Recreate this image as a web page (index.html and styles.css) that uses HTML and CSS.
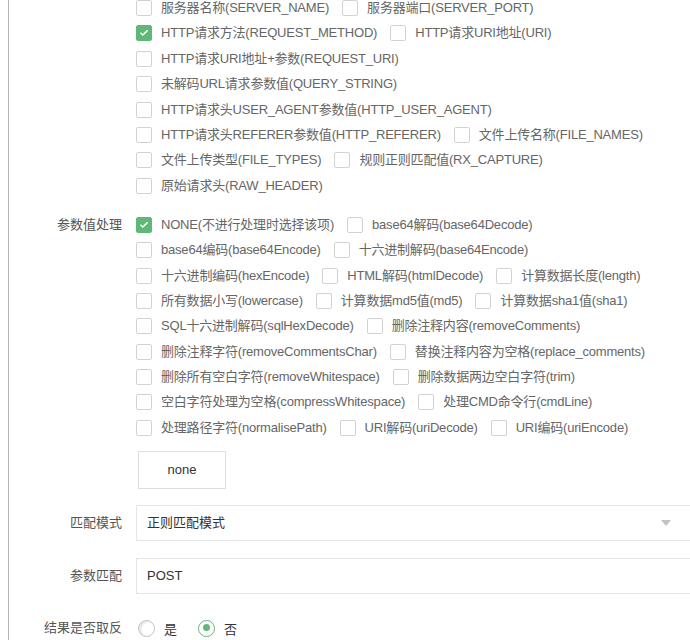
FILE: index.html
```html
<!DOCTYPE html>
<html lang="zh-CN">
<head>
    <meta charset="UTF-8">
    <meta name="viewport" content="width=device-width, initial-scale=1.0">
    <title>规则编辑</title>
    <link rel="stylesheet" href="styles.css">
</head>
<body>
<div class="form">
    <div class="form-item item-vars">
        <label class="form-label"></label>
        <div class="checks">
            <label class="check"><span class="box"></span>服务器名称(SERVER_NAME)</label>
            <label class="check"><span class="box"></span>服务器端口(SERVER_PORT)</label>
            <label class="check checked"><span class="box"><svg viewBox="0 0 16 16"><path d="M4 7.6l2.7 2.6L12.1 5"/></svg></span>HTTP请求方法(REQUEST_METHOD)</label>
            <label class="check"><span class="box"></span>HTTP请求URI地址(URI)</label>
            <label class="check"><span class="box"></span>HTTP请求URI地址+参数(REQUEST_URI)</label>
            <label class="check"><span class="box"></span>未解码URL请求参数值(QUERY_STRING)</label>
            <label class="check"><span class="box"></span>HTTP请求头USER_AGENT参数值(HTTP_USER_AGENT)</label>
            <label class="check"><span class="box"></span>HTTP请求头REFERER参数值(HTTP_REFERER)</label>
            <label class="check"><span class="box"></span>文件上传名称(FILE_NAMES)</label>
            <label class="check"><span class="box"></span>文件上传类型(FILE_TYPES)</label>
            <label class="check"><span class="box"></span>规则正则匹配值(RX_CAPTURE)</label>
            <label class="check"><span class="box"></span>原始请求头(RAW_HEADER)</label>
        </div>
    </div>

    <div class="form-item item-trans">
        <label class="form-label">参数值处理</label>
        <div class="input-block">
            <div class="checks">
                <label class="check checked"><span class="box"><svg viewBox="0 0 16 16"><path d="M4 7.6l2.7 2.6L12.1 5"/></svg></span>NONE(不进行处理时选择该项)</label>
                <label class="check"><span class="box"></span>base64解码(base64Decode)</label>
                <label class="check"><span class="box"></span>base64编码(base64Encode)</label>
                <label class="check"><span class="box"></span>十六进制解码(base64Encode)</label>
                <label class="check"><span class="box"></span>十六进制编码(hexEncode)</label>
                <label class="check"><span class="box"></span>HTML解码(htmlDecode)</label>
                <label class="check"><span class="box"></span>计算数据长度(length)</label>
                <label class="check"><span class="box"></span>所有数据小写(lowercase)</label>
                <label class="check"><span class="box"></span>计算数据md5值(md5)</label>
                <label class="check"><span class="box"></span>计算数据sha1值(sha1)</label>
                <label class="check"><span class="box"></span>SQL十六进制解码(sqlHexDecode)</label>
                <label class="check"><span class="box"></span>删除注释内容(removeComments)</label>
                <label class="check"><span class="box"></span>删除注释字符(removeCommentsChar)</label>
                <label class="check"><span class="box"></span>替换注释内容为空格(replace_comments)</label>
                <label class="check"><span class="box"></span>删除所有空白字符(removeWhitespace)</label>
                <label class="check"><span class="box"></span>删除数据两边空白字符(trim)</label>
                <label class="check"><span class="box"></span>空白字符处理为空格(compressWhitespace)</label>
                <label class="check"><span class="box"></span>处理CMD命令行(cmdLine)</label>
                <label class="check"><span class="box"></span>处理路径字符(normalisePath)</label>
                <label class="check"><span class="box"></span>URI解码(uriDecode)</label>
                <label class="check"><span class="box"></span>URI编码(uriEncode)</label>
            </div>
            <button class="btn">none</button>
        </div>
    </div>

    <div class="form-item item-mode">
        <label class="form-label">匹配模式</label>
        <div class="select">
            <div class="input">正则匹配模式</div>
            <i class="arrow"></i>
        </div>
    </div>

    <div class="form-item item-param">
        <label class="form-label">参数匹配</label>
        <div class="input">POST</div>
    </div>

    <div class="form-item item-negate">
        <label class="form-label">结果是否取反</label>
        <div class="radios">
            <label class="radio"><span class="dot"></span>是</label>
            <label class="radio checked"><span class="dot"></span>否</label>
        </div>
    </div>
</div>
</body>
</html>
```

FILE: styles.css
```css
* {
    padding: 0;
    margin: 0;
    box-sizing: border-box;
}

body {
    overflow: hidden;
    background: #fff;
    font-family: "Liberation Sans", "Noto Sans CJK SC", sans-serif;
    font-size: 13px;
    color: #666;
}

.form {
    margin-left: 8px;
    width: 700px;
    min-height: 100vh;
    border-left: 1px solid #b4b4b4;
}

.form-item {
    display: flex;
}

.form-label {
    flex: 0 0 127px;
    padding-right: 14px;
    text-align: right;
    line-height: 16px;
    color: #555;
}

.item-vars { margin-bottom: 23px; }
.item-trans { margin-bottom: 16px; }
.item-mode { margin-bottom: 17px; align-items: center; }
.item-param { margin-bottom: 25px; align-items: center; }
.item-negate { align-items: center; }

.checks {
    width: 529px;
    display: flex;
    flex-wrap: wrap;
    column-gap: 13px;
    row-gap: 9.4px;
}

.check {
    display: inline-flex;
    align-items: center;
    height: 16px;
    line-height: 16px;
    letter-spacing: -0.2px;
    white-space: nowrap;
    cursor: pointer;
}

.box {
    width: 16px;
    height: 16px;
    margin-right: 9px;
    border: 1px solid #d2d2d2;
    border-radius: 2px;
    background: #fff;
}

.box svg {
    display: block;
    width: 14px;
    height: 14px;
}

.box path {
    fill: none;
    stroke: #fff;
    stroke-width: 1.6;
}

.check.checked .box {
    border-color: #5fb878;
    background: #5fb878;
}

.btn {
    display: block;
    margin: 15px 0 0 2px;
    width: 88px;
    height: 38px;
    border: 1px solid #dedede;
    background: #fff;
    font-family: inherit;
    font-size: 13px;
    color: #333;
    cursor: pointer;
}

.select {
    position: relative;
}

.input {
    width: 564px;
    height: 36px;
    line-height: 34px;
    padding-left: 10px;
    border: 1px solid #e6e6e6;
    color: #333;
}

.arrow {
    position: absolute;
    right: 29px;
    top: 15px;
    border-style: solid;
    border-width: 6px 5px 0;
    border-color: #c2c2c2 transparent transparent;
}

.radios {
    display: flex;
    align-items: center;
}

.radio {
    display: inline-flex;
    align-items: center;
    margin-right: 21px;
    color: #333;
    cursor: pointer;
}

.radio:first-child {
    margin-left: 2px;
}

.dot {
    position: relative;
    width: 17px;
    height: 17px;
    margin-right: 9px;
    border: 1px solid #c2c2c2;
    border-radius: 50%;
    box-shadow: inset 2px 1px 2px #e2e2e2;
}

.radio.checked .dot {
    border: 1.5px solid #5fb878;
    box-shadow: none;
}

.radio.checked .dot::after {
    content: "";
    position: absolute;
    left: 3.5px;
    top: 3.5px;
    width: 7px;
    height: 7px;
    border-radius: 50%;
    background: #5fb878;
}
```
